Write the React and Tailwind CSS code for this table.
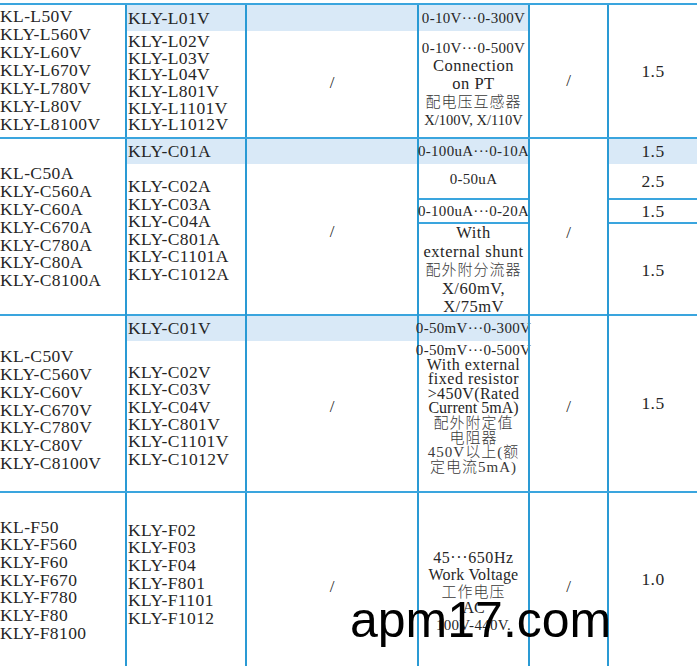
import React from "react";

const HL = "bg-[#d9e9f7]";
const M = "text-[17.5px] tracking-[0.4px]";

function L({ items, className = "" }) {
  return (
    <div className={className}>
      {items.map((t, i) => (
        <div key={i}>{t}</div>
      ))}
    </div>
  );
}

function Row({ h, children }) {
  return (
    <div
      className={
        "grid grid-cols-[125px_120px_172px_111px_79px_90px] border-t-2 border-[#3aa5de] " + h
      }
    >
      {children}
    </div>
  );
}

const V = "border-l-2 border-[#2a9ad4]";
const N = "text-[15px] tracking-[0.3px] whitespace-nowrap";
const W = "text-[16.5px] tracking-[0.5px] whitespace-nowrap";
const C = "text-[15px] tracking-[1px] font-light text-[#3a3a3a] whitespace-nowrap";

export default function App() {
  return (
    <div className="w-[697px] h-[666px] overflow-hidden bg-white relative font-['Liberation_Serif','Noto_Sans_CJK_SC',serif] text-[#262626]">
      <div className="h-[3px]" />

      {/* Row 1 */}
      <Row h="h-[134px]">
        <div className="flex items-center pb-[3px]">
          <L
            className={M + " leading-[18px]"}
            items={["KL-L50V", "KLY-L560V", "KLY-L60V", "KLY-L670V", "KLY-L780V", "KLY-L80V", "KLY-L8100V"]}
          />
        </div>
        <div className={V + " flex flex-col"}>
          <div className={"h-[26px] flex items-center pl-[1px] " + HL + " " + M}>KLY-L01V</div>
          <div className="flex-1 flex items-center pl-[1px] pb-[2px]">
            <L
              className={M + " leading-[16.6px]"}
              items={["KLY-L02V", "KLY-L03V", "KLY-L04V", "KLY-L801V", "KLY-L1101V", "KLY-L1012V"]}
            />
          </div>
        </div>
        <div className={V + " flex flex-col"}>
          <div className={"h-[26px] " + HL} />
          <div className="flex-1 flex items-center justify-center text-[17px] pb-[2px]">/</div>
        </div>
        <div className={V + " flex flex-col"}>
          <div className={"h-[26px] flex items-center justify-center " + HL + " " + N}>0-10V···0-300V</div>
          <div className="flex-1 flex flex-col items-center justify-center text-center leading-[18px]">
            <div className={N}>0-10V···0-500V</div>
            <div className={W}>Connection</div>
            <div className={W}>on PT</div>
            <div className={C}>配电压互感器</div>
            <div className="text-[14.5px] whitespace-nowrap">X/100V, X/110V</div>
          </div>
        </div>
        <div className={V + " flex items-center justify-center text-[17px] pt-5"}>/</div>
        <div className={V + " flex items-center justify-center " + M}>1.5</div>
      </Row>

      {/* Row 2 */}
      <Row h="h-[177px]">
        <div className="flex items-center">
          <L
            className={M + " leading-[17.8px]"}
            items={["KL-C50A", "KLY-C560A", "KLY-C60A", "KLY-C670A", "KLY-C780A", "KLY-C80A", "KLY-C8100A"]}
          />
        </div>
        <div className={V + " flex flex-col"}>
          <div className={"h-[25px] flex items-center pl-[1px] " + HL + " " + M}>KLY-C01A</div>
          <div className="flex-1 flex items-center pl-[1px] pb-[19px]">
            <L
              className={M + " leading-[17.6px]"}
              items={["KLY-C02A", "KLY-C03A", "KLY-C04A", "KLY-C801A", "KLY-C1101A", "KLY-C1012A"]}
            />
          </div>
        </div>
        <div className={V + " flex flex-col"}>
          <div className={"h-[25px] " + HL} />
          <div className="flex-1 flex items-center justify-center text-[17px] pb-[18px]">/</div>
        </div>
        <div className={V + " flex flex-col"}>
          <div className={"h-[25px] flex items-center justify-center " + HL + " " + N}>0-100uA···0-10A</div>
          <div className={"h-[34px] flex items-center justify-center pb-[4px] " + N}>0-50uA</div>
          <div className={"h-[24px] border-t-2 border-[#3aa5de] flex items-center justify-center " + N}>
            0-100uA···0-20A
          </div>
          <div className="flex-1 border-t-2 border-[#3aa5de] flex flex-col items-center justify-center text-center leading-[18.5px]">
            <div className={W}>With</div>
            <div className={W}>external shunt</div>
            <div className={C}>配外附分流器</div>
            <div className={W}>X/60mV,</div>
            <div className={W}>X/75mV</div>
          </div>
        </div>
        <div className={V + " flex items-center justify-center text-[17px] pt-[10px]"}>/</div>
        <div className={V + " flex flex-col"}>
          <div className={"h-[25px] flex items-center justify-center " + HL + " " + M}>1.5</div>
          <div className={"h-[34px] flex items-center justify-center " + M}>2.5</div>
          <div className={"h-[24px] border-t-2 border-[#3aa5de] flex items-center justify-center " + M}>1.5</div>
          <div className={"flex-1 border-t-2 border-[#3aa5de] flex items-center justify-center " + M}>1.5</div>
        </div>
      </Row>

      {/* Row 3 */}
      <Row h="h-[177px]">
        <div className="flex items-center pt-[14px]">
          <L
            className={M + " leading-[17.8px]"}
            items={["KL-C50V", "KLY-C560V", "KLY-C60V", "KLY-C670V", "KLY-C780V", "KLY-C80V", "KLY-C8100V"]}
          />
        </div>
        <div className={V + " flex flex-col"}>
          <div className={"h-[25px] flex items-center pl-[1px] " + HL + " " + M}>KLY-C01V</div>
          <div className="flex-1 flex items-center pl-[1px]">
            <L
              className={M + " leading-[17.4px]"}
              items={["KLY-C02V", "KLY-C03V", "KLY-C04V", "KLY-C801V", "KLY-C1101V", "KLY-C1012V"]}
            />
          </div>
        </div>
        <div className={V + " flex flex-col"}>
          <div className={"h-[25px] " + HL} />
          <div className="flex-1 flex items-center justify-center text-[17px] pb-[18px]">/</div>
        </div>
        <div className={V + " flex flex-col"}>
          <div className={"h-[25px] flex items-center justify-center " + HL + " " + N}>0-50mV···0-300V</div>
          <div className="flex-1 flex flex-col items-center pt-[2px] text-center leading-[14.6px]">
            <div className={N}>0-50mV···0-500V</div>
            <div className="text-[16px] tracking-[0.5px] whitespace-nowrap">With external</div>
            <div className="text-[16px] tracking-[0.5px] whitespace-nowrap">fixed resistor</div>
            <div className="text-[16px] tracking-[0.4px] whitespace-nowrap">&gt;450V(Rated</div>
            <div className="text-[16px] tracking-[0px] whitespace-nowrap">Current 5mA)</div>
            <div className={C}>配外附定值</div>
            <div className={C}>电阻器</div>
            <div className={C}>450V以上(额</div>
            <div className={C}>定电流5mA)</div>
          </div>
        </div>
        <div className={V + " flex items-center justify-center text-[17px] pt-[6px]"}>/</div>
        <div className={V + " flex items-center justify-center " + M}>1.5</div>
      </Row>

      {/* Row 4 */}
      <Row h="h-[175px]">
        <div className="flex items-center pt-[2px]">
          <L
            className={M + " leading-[17.7px]"}
            items={["KL-F50", "KLY-F560", "KLY-F60", "KLY-F670", "KLY-F780", "KLY-F80", "KLY-F8100"]}
          />
        </div>
        <div className={V + " flex items-center pl-[1px] pb-[10px]"}>
          <L
            className={M + " leading-[17.6px]"}
            items={["KLY-F02", "KLY-F03", "KLY-F04", "KLY-F801", "KLY-F1101", "KLY-F1012"]}
          />
        </div>
        <div className={V + " flex items-center justify-center text-[17px] pt-[15px]"}>/</div>
        <div className={V + " flex flex-col items-center justify-center text-center leading-[16.8px] pt-[25px]"}>
          <div className="text-[16px] tracking-[0.6px] whitespace-nowrap">45···650Hz</div>
          <div className="text-[16px] tracking-[0.2px] whitespace-nowrap">Work Voltage</div>
          <div className={C}>工作电压</div>
          <div className="text-[16px] whitespace-nowrap">AC</div>
          <div className={N}>100V-440V.</div>
        </div>
        <div className={V + " flex items-center justify-center text-[17px] pt-[15px]"}>/</div>
        <div className={V + " flex items-center justify-center " + M}>1.0</div>
      </Row>

      <div className="absolute left-[350px] top-[595px] text-[50px] leading-[50px] text-black font-['Liberation_Sans',Arial,sans-serif] whitespace-nowrap">
        apm17.com
      </div>
    </div>
  );
}
